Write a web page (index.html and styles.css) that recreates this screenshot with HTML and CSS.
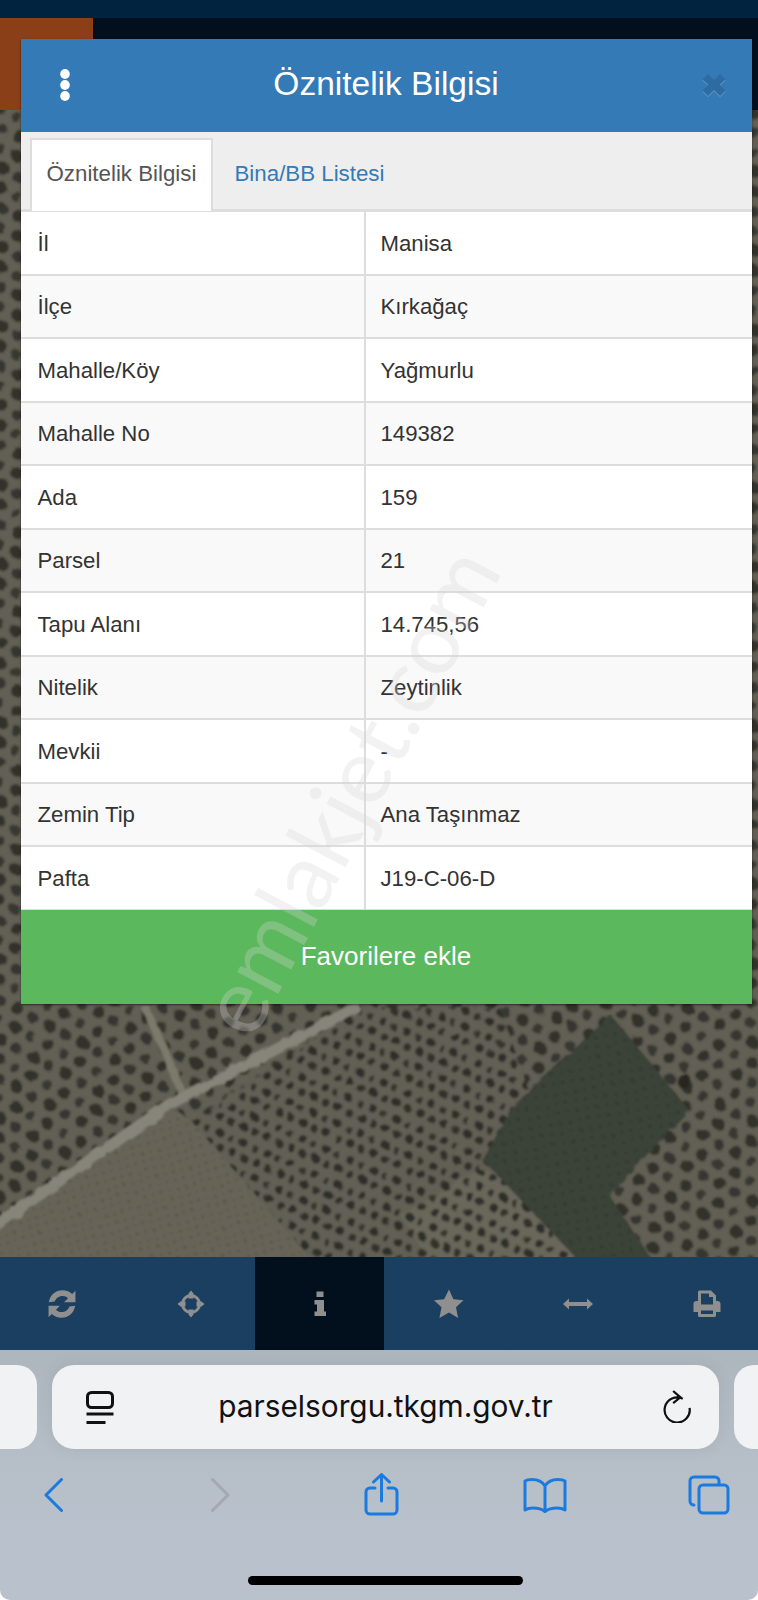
FILE: index.html
```html
<!DOCTYPE html>
<html lang="tr">
<head>
<meta charset="utf-8">
<title>Öznitelik Bilgisi</title>
<link rel="stylesheet" href="styles.css">
</head>
<body>
<div class="phone">
  <div class="app">
    <div class="topbar"></div>
    <div class="subbar"><div class="brand"></div></div>
    <div class="map">
      <svg class="map-svg" viewBox="0 110 758 1147" preserveAspectRatio="none" aria-hidden="true">
        <defs>
          <pattern id="treesBig" width="37" height="35" patternUnits="userSpaceOnUse" patternTransform="rotate(28)">
            <ellipse cx="7" cy="7" rx="6.300" ry="6" fill="#30302a"/>
            <ellipse cx="25" cy="8" rx="5.300" ry="5.300" fill="#363630"/>
            <ellipse cx="15" cy="25" rx="6" ry="5.800" fill="#31312b"/>
            <ellipse cx="33" cy="26" rx="4.900" ry="5.100" fill="#383831"/>
          </pattern>
          <pattern id="treesSmall" width="26" height="28" patternUnits="userSpaceOnUse" patternTransform="rotate(24)">
            <ellipse cx="5" cy="6" rx="4.300" ry="4.300" fill="#2f2f29"/>
            <ellipse cx="18" cy="7" rx="3.700" ry="4" fill="#33332c"/>
            <ellipse cx="11" cy="21" rx="4.200" ry="4" fill="#2f2f29"/>
            <ellipse cx="24" cy="22" rx="3.400" ry="3.600" fill="#36362e"/>
          </pattern>
          <pattern id="treesFaint" width="12" height="12" patternUnits="userSpaceOnUse" patternTransform="rotate(30)">
            <circle cx="4" cy="4" r="1.700" fill="#595749"/>
            <circle cx="10" cy="10" r="1.500" fill="#5c5a4c"/>
          </pattern>
          <pattern id="rowsField" width="14" height="14" patternUnits="userSpaceOnUse" patternTransform="rotate(35)">
            <circle cx="4" cy="4" r="2.600" fill="#363e34"/>
            <circle cx="11" cy="11" r="2.400" fill="#373f35"/>
          </pattern>
          <filter id="rough" x="0" y="0" width="100%" height="100%">
            <feTurbulence type="fractalNoise" baseFrequency="0.07" numOctaves="2" seed="7" result="n"/>
            <feDisplacementMap in="SourceGraphic" in2="n" scale="6"/>
            <feGaussianBlur stdDeviation="1"/>
          </filter>
        </defs>
        <rect x="0" y="110" width="758" height="1147" fill="#625f54"/>
        <g filter="url(#rough)">
          <rect x="-10" y="100" width="780" height="1170" fill="url(#treesBig)"/>
          <polygon points="190,1122 360,1008 500,1008 530,1095 478,1170 560,1262 312,1262" fill="#625f54"/>
          <polygon points="190,1122 360,1008 500,1008 530,1095 478,1170 560,1262 312,1262" fill="url(#treesSmall)"/>
          <polygon points="-10,1262 -10,1226 170,1105 192,1122 314,1262" fill="#676458"/>
          <polygon points="-10,1262 -10,1226 170,1105 192,1122 314,1262" fill="url(#treesFaint)"/>
          <polygon points="478,1170 520,1175 610,1262 430,1262 400,1215" fill="#69665a"/>
          <polygon points="478,1170 520,1175 610,1262 430,1262 400,1215" fill="url(#treesSmall)"/>
          <polygon class="field" points="611,1015 689,1110 609,1195 654,1262 580,1262 483,1160 512,1107"/>
          <polygon points="611,1015 689,1110 609,1195 654,1262 580,1262 483,1160 512,1107" fill="url(#rowsField)"/>
          <circle class="lone-tree" cx="684" cy="1081" r="7"/>
          <polyline class="road" points="-5,1226 170,1104 360,1006"/>
          <polyline class="track" points="145,1006 182,1092"/>
        </g>
      </svg>
    </div>
    <nav class="bottom-nav">
      <a class="nav-cell" href="#"><svg class="nav-icon" viewBox="2.500 2.500 25 25"><path d="M4 13.500C5 7.500 9.500 3.500 15.500 3.500c3.200 0 6 1.200 8 3.200l2.700-2.700v9.500h-9.500l3.300-3.300c-1.200-1.200-2.800-1.900-4.500-1.900-3.200 0-5.800 2-6.600 4.700zM26 16.500c-1 6-5.500 10-11.500 10-3.200 0-6-1.200-8-3.200L3.800 26v-9.500h9.500L10 19.800c1.200 1.200 2.800 1.900 4.500 1.900 3.200 0 5.800-2 6.600-4.700z"/></svg></a>
      <a class="nav-cell" href="#"><svg class="nav-icon" viewBox="0 0 30 30"><circle class="ring" cx="15" cy="15" r="8.500"/><path d="M15 1.500l2.500 3v5h-5v-5zM15 28.500l2.500-3v-5h-5v5zM1.500 15l3 2.500h5v-5h-5zM28.500 15l-3 2.500h-5v-5h5z"/></svg></a>
      <a class="nav-cell nav-cell-active" href="#"><svg class="nav-icon" viewBox="0 0 30 30"><path d="M11.500 2.500h7v5.500h-7zM9.500 11h9.500v11.500h2V27H9.500v-4.500h2.500V15.500H9.500z"/></svg></a>
      <a class="nav-cell" href="#"><svg class="nav-icon" viewBox="0 0 30 30"><path d="M15 0.500l4.400 9.700 10.100 1.100-7.500 7 2.100 10.700L15 23.600l-9.600 5.400 2.100-10.700-7.500-7 10.100-1.100z"/></svg></a>
      <a class="nav-cell" href="#"><svg class="nav-icon" viewBox="0 0 30 30"><path d="M0 15l6-5.500V13h18V9.500l6 5.500-6 5.500V17H6v3.500z"/></svg></a>
      <a class="nav-cell" href="#"><svg class="nav-icon" viewBox="0 0 30 30"><path fill-rule="evenodd" d="M6 12V3a1.500 1.500 0 0 1 1.500-1.500H19l5 5V12h1.500c1.900 0 3 1.200 3 3v8h-4.500v3.500a1.500 1.500 0 0 1-1.500 1.500H7.500A1.500 1.500 0 0 1 6 26.500V23H1.500v-8c0-1.900 1.100-3 3-3zM9 4.500v11h12V8h-4V4.500zM9 21.500V25h12v-3.500z"/></svg></a>
    </nav>

    <section class="modal">
      <header class="modal-head">
        <svg class="kebab" viewBox="0 0 10 32"><ellipse cx="5" cy="5" rx="4.800" ry="5"/><ellipse cx="5" cy="16" rx="4.800" ry="5"/><ellipse cx="5" cy="27" rx="4.800" ry="5"/></svg>
        <h1 class="modal-title">Öznitelik Bilgisi</h1>
        <svg class="close" viewBox="0 0 24 24"><path d="M6 1l6 6 6-6 5.500 5.500-6 5.500 6 5.500L18 23l-6-6-6 6-5.500-5.500 6-5.500-6-5.500z"/></svg>
      </header>
      <div class="tabs">
        <a class="tab tab-active" href="#">Öznitelik Bilgisi</a>
        <a class="tab" href="#">Bina/BB Listesi</a>
      </div>
      <div class="rows">
        <div class="row"><div class="cell cell-key">İl</div><div class="cell cell-val">Manisa</div></div>
        <div class="row"><div class="cell cell-key">İlçe</div><div class="cell cell-val">Kırkağaç</div></div>
        <div class="row"><div class="cell cell-key">Mahalle/Köy</div><div class="cell cell-val">Yağmurlu</div></div>
        <div class="row"><div class="cell cell-key">Mahalle No</div><div class="cell cell-val">149382</div></div>
        <div class="row"><div class="cell cell-key">Ada</div><div class="cell cell-val">159</div></div>
        <div class="row"><div class="cell cell-key">Parsel</div><div class="cell cell-val">21</div></div>
        <div class="row"><div class="cell cell-key">Tapu Alanı</div><div class="cell cell-val">14.745,56</div></div>
        <div class="row"><div class="cell cell-key">Nitelik</div><div class="cell cell-val">Zeytinlik</div></div>
        <div class="row"><div class="cell cell-key">Mevkii</div><div class="cell cell-val">-</div></div>
        <div class="row"><div class="cell cell-key">Zemin Tip</div><div class="cell cell-val">Ana Taşınmaz</div></div>
        <div class="row"><div class="cell cell-key">Pafta</div><div class="cell cell-val">J19-C-06-D</div></div>
      </div>
      <button class="fav" type="button">Favorilere ekle</button>
    </section>
    <div class="watermark">emlakjet.com</div>
  </div>

  <div class="browser">
    <div class="url-row">
      <div class="url-stub url-stub-left"></div>
      <div class="url-bar">
        <svg class="reader" viewBox="0 0 28 33"><rect x="1.500" y="1.500" width="25" height="15" rx="4"/><path d="M0.500 23h27M0.500 31.500h19"/></svg>
        <span class="url-text">parselsorgu.tkgm.gov.tr</span>
        <svg class="reload" viewBox="0 0 30 34"><path d="M20.500 9.500A13 13 0 1 0 27.500 19M10.500 1.500l7.500 6.500-7.500 6"/></svg>
      </div>
      <div class="url-stub url-stub-right"></div>
    </div>
    <div class="tools">
      <svg class="tool tool-back" viewBox="0 0 19 34"><path d="M17.500 1.500L2 17l15.500 15.500"/></svg>
      <svg class="tool tool-forward" viewBox="0 0 19 34"><path d="M1.500 1.500L17 17 1.500 32.500"/></svg>
      <svg class="tool tool-share" viewBox="0 0 35 43"><path d="M11 15H6a4 4 0 0 0-4 4v18a4 4 0 0 0 4 4h23a4 4 0 0 0 4-4V19a4 4 0 0 0-4-4h-5M17.500 28V2M9.500 9l8-7.500 8 7.500"/></svg>
      <svg class="tool tool-book" viewBox="0 0 44 35"><path d="M22 8C19 3 14 1.500 9 1.500 6 1.500 3.500 2 2 3v29c2-1.300 5-2 8-2 5 0 9 1 12 3.500 3-2.500 7-3.500 12-3.500 3 0 6 .7 8 2V3c-1.500-1-4-1.500-7-1.500-5 0-10 1.500-13 6.500zM22 8v25"/></svg>
      <svg class="tool tool-tabs" viewBox="0 0 42 40"><path d="M6 30a4 4 0 0 1-4-4V6a4 4 0 0 1 4-4h21a4 4 0 0 1 4 4v3"/><rect x="11" y="10" width="29" height="28" rx="4"/></svg>
    </div>
    <div class="home-bar"></div>
  </div>
</div>
</body>
</html>
```
FILE: styles.css
```css
* { box-sizing: border-box; }
html, body { margin: 0; padding: 0; background: #fff; }
body { font-family: "Liberation Sans", Arial, sans-serif; color: #333; }

.phone { width: 758px; height: 1600px; overflow: hidden; display: flex; flex-direction: column; }
.app { position: relative; height: 1350px; display: flex; flex-direction: column; overflow: hidden; }

.topbar { height: 18px; background: #02233f; flex: none; }
.subbar { height: 92px; background: #020f1d; flex: none; }
.brand { width: 93px; height: 100%; background: #8a3f19; }

.map { flex: 1; min-height: 0; background: #625f54; }
.map-svg { display: block; width: 100%; height: 100%; }
.field { fill: #3b4339; }
.lone-tree { fill: #26261f; }
.road { fill: none; stroke: #87847a; stroke-width: 11; }
.track { fill: none; stroke: #7d7a6c; stroke-width: 8; }

.bottom-nav { height: 93px; flex: none; display: flex; background: #1a3f60; margin-left: -3px; width: 774px; }
.nav-cell { flex: none; width: 129px; display: flex; align-items: center; justify-content: center; }
.nav-cell-active { background: #020f1d; }
.nav-icon { width: 30px; height: 30px; fill: #8f8f8f; }
.ring { fill: none; stroke: #8f8f8f; stroke-width: 3; }

.modal { position: absolute; left: 20.500px; top: 38.500px; width: 731px; height: 965px; display: flex; flex-direction: column; background: #fff; box-shadow: 0 1px 2px rgba(0, 0, 0, .55); }
.modal-head { height: 93.500px; flex: none; background: #337ab7; display: flex; align-items: center; justify-content: center; position: relative; padding-bottom: 4px; }
.modal-title { margin: 0; color: #fff; font-size: 33.500px; font-weight: 400; line-height: 1; }
.kebab { position: absolute; left: 39.500px; top: 30px; width: 10px; height: 32px; fill: #fff; }
.close { position: absolute; right: 26px; top: 34px; width: 24px; height: 24px; fill: #2f6ba3; filter: drop-shadow(0 1px 0 rgba(255, 255, 255, .25)); }

.tabs { height: 80px; flex: none; background: #eee; border-bottom: 3px solid #ddd; padding: 6px 0 0 9px; display: flex; }
.tab { display: flex; align-items: center; flex: none; white-space: nowrap; padding: 0 15px 4px; margin-bottom: -2px; font-size: 22.300px; color: #337ab7; text-decoration: none; border: 2px solid transparent; border-bottom: 0; }
.tab-active { background: #fff; color: #555; border-color: #ddd; width: 183px; }
.tab + .tab { padding-left: 20px; }

.rows { flex: 1; min-height: 0; display: flex; flex-direction: column; }
.row { flex: 1; display: flex; border-bottom: 2px solid #ddd; background: #fff; }
.row:nth-child(even) { background: #f9f9f9; }
.row:last-child { border-bottom: 1px solid #ddd; }
.cell { display: flex; align-items: center; font-size: 22.200px; color: #333; padding-top: 2px; }
.cell-key { width: 345px; padding-left: 17px; border-right: 2px solid #ddd; }
.cell-val { flex: 1; padding-left: 15px; }

.fav { height: 94px; flex: none; width: 100%; border: 0; padding: 0; background: #5cb85c; color: #fff; font: 400 26px "Liberation Sans", Arial, sans-serif; }

.watermark { position: absolute; left: 347px; top: 790px; transform: translate(-50%, -50%) rotate(-62deg); font-family: Lato, sans-serif; font-weight: 400; font-size: 92px; line-height: 1; white-space: nowrap; color: rgba(212, 212, 212, .3); pointer-events: none; }

.browser { flex: 1; min-height: 0; position: relative; display: flex; flex-direction: column; background: linear-gradient(#adb5bd 0, #b5bdc6 100px, #b9c2cc 180px); border-radius: 0 0 10px 10px; }
.url-row { height: 84px; margin-top: 15px; flex: none; display: flex; gap: 15px; margin-left: -40px; }
.url-stub { width: 77px; flex: none; background: #f0f2f4; border-radius: 20px; }
.url-bar { width: 667px; flex: none; background: #f0f2f4; border-radius: 22px; display: flex; align-items: center; justify-content: center; position: relative; box-shadow: 0 0 14px rgba(90, 100, 110, .12); }
.url-text { font-family: Inter, "Liberation Sans", sans-serif; font-size: 29.800px; color: #111; line-height: 1; }
.reader { position: absolute; left: 34px; top: 26px; width: 28px; height: 33px; fill: none; stroke: #111; stroke-width: 3; }
.reload { position: absolute; right: 27px; top: 24px; width: 29px; height: 34px; fill: none; stroke: #111; stroke-width: 2.300; }

.tools { display: flex; align-items: flex-start; padding-left: 44px; height: 70px; margin-top: 24px; flex: none; }
.tool { flex: none; fill: none; stroke: #1a7ae0; stroke-width: 3; stroke-linecap: round; stroke-linejoin: round; }
.tool-back { width: 19px; height: 34px; margin-top: 5px; }
.tool-forward { width: 19px; height: 34px; margin-top: 5px; margin-left: 148px; stroke: #a3a9b0; }
.tool-share { width: 35px; height: 43px; margin-left: 134px; }
.tool-book { width: 44px; height: 35px; margin-left: 124px; margin-top: 5px; }
.tool-tabs { width: 42px; height: 40px; margin-left: 121px; margin-top: 2px; }

.home-bar { width: 275px; height: 9px; background: #000; border-radius: 5px; position: absolute; left: 248px; top: 226px; }
```
